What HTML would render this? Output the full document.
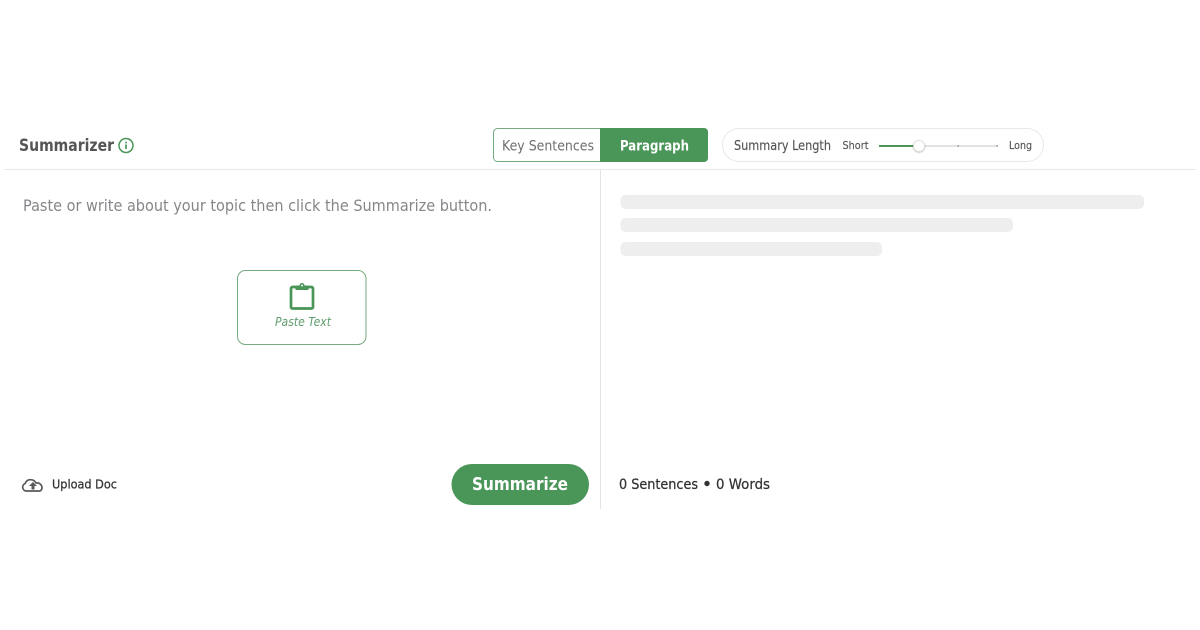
<!DOCTYPE html>
<html lang="en">
<head>
<meta charset="utf-8">
<title>Summarizer</title>
<style>
html,body{margin:0;padding:0;background:#fff;width:1200px;height:630px;overflow:hidden}
svg{display:block}
text{font-family:"DejaVu Sans","Liberation Sans",sans-serif}
</style>
</head>
<body>
<svg width="1200" height="630" viewBox="0 0 1200 630" xmlns="http://www.w3.org/2000/svg">
<defs>
<filter id="s" x="-50%" y="-50%" width="200%" height="200%"><feDropShadow dx="0" dy="0.500" stdDeviation="0.800" flood-color="#000" flood-opacity="0.350"/></filter>
</defs>
<rect width="1200" height="630" fill="#fff"/>
<!-- dividers -->
<rect x="4" y="169" width="1192" height="1" fill="#e8e8e8"/>
<rect x="600" y="170" width="1" height="339" fill="#e4e4e4"/>

<!-- title -->
<text x="19" y="151" font-size="16.500" font-weight="700" fill="#555" textLength="95" lengthAdjust="spacingAndGlyphs">Summarizer</text>
<circle cx="126" cy="145.500" r="7" fill="none" stroke="#4a9558" stroke-width="1.500"/>
<rect x="125.200" y="144.500" width="1.700" height="4.500" fill="#4a9558"/>
<rect x="125.200" y="141.700" width="1.700" height="1.700" fill="#4a9558"/>

<!-- toggle -->
<rect x="493.500" y="128.500" width="214" height="33" rx="4" fill="#fff" stroke="#74ab7f"/>
<path d="M600 128h104a4 4 0 0 1 4 4v26a4 4 0 0 1-4 4H600z" fill="#4a9558"/>
<text x="502" y="150.300" font-size="14" fill="#6f6f6f" textLength="92" lengthAdjust="spacingAndGlyphs">Key Sentences</text>
<text x="620" y="150.300" font-size="14.500" font-weight="700" fill="#fff" textLength="69" lengthAdjust="spacingAndGlyphs">Paragraph</text>

<!-- summary length pill -->
<rect x="722.500" y="128.500" width="321" height="33" rx="16.500" fill="#fff" stroke="#e8e8e8"/>
<text x="734" y="150" font-size="13" fill="#555" stroke="#555" stroke-width="0.150" textLength="97" lengthAdjust="spacingAndGlyphs">Summary Length</text>
<text x="842.500" y="149" font-size="11" fill="#555" stroke="#555" stroke-width="0.150" textLength="26" lengthAdjust="spacingAndGlyphs">Short</text>
<text x="1009" y="149" font-size="11" fill="#555" stroke="#555" stroke-width="0.150" textLength="23" lengthAdjust="spacingAndGlyphs">Long</text>
<rect x="879" y="145" width="119" height="2" fill="#e2e2e2"/>
<rect x="879" y="145" width="40" height="2" fill="#4a9558"/>
<rect x="957.500" y="145" width="1.500" height="2" fill="#aaa"/>
<rect x="996.500" y="145" width="1.500" height="2" fill="#aaa"/>
<circle cx="919" cy="146" r="5.500" fill="#fff" stroke="#dedede" stroke-width="0.800" filter="url(#s)"/>

<!-- placeholder -->
<text x="23" y="210.800" font-size="16" fill="#86868a" textLength="469" lengthAdjust="spacingAndGlyphs">Paste or write about your topic then click the Summarize button.</text>

<!-- paste button -->
<rect x="237.500" y="270.500" width="128.500" height="74" rx="8" fill="#fff" stroke="#74ab7f"/>
<path d="M296 287h-3.500a1.500 1.500 0 0 0-1.500 1.500v18.500a1.500 1.500 0 0 0 1.500 1.500h19a1.500 1.500 0 0 0 1.500-1.500v-18.500a1.500 1.500 0 0 0-1.500-1.500H308" fill="none" stroke="#4a9558" stroke-width="2.700"/>
<path d="M295.500 285.500h4a2.500 2.500 0 0 1 5 0h4v4.500h-13z" fill="#4a9558"/>
<circle cx="302" cy="285.500" r="1" fill="#fff"/>
<text x="275" y="326" font-size="12" font-style="italic" fill="#5f9c6c" textLength="56" lengthAdjust="spacingAndGlyphs">Paste Text</text>

<!-- skeletons -->
<rect x="620.500" y="195" width="523.500" height="14" rx="5" fill="#eeeeee"/>
<rect x="620.500" y="218" width="392.500" height="14" rx="5" fill="#eeeeee"/>
<rect x="620.500" y="242" width="261.500" height="14" rx="5" fill="#eeeeee"/>

<!-- upload -->
<path d="M28 491h-2a3.900 3.900 0 0 1-.8-7.500 5 5 0 0 1 5.200-3.800 6.300 6.300 0 0 1 5.600 3.300 5 5 0 0 1 6 4.300 3.900 3.900 0 0 1-2 3.700h-12z" fill="none" stroke="#5a5a5a" stroke-width="1.700" stroke-linejoin="round"/>
<path d="M33 482l4 4h-2.500v3.500h-3v-3.500H29z" fill="#5a5a5a"/>
<text x="52" y="488.500" font-size="12" fill="#333" stroke="#333" stroke-width="0.250" textLength="65" lengthAdjust="spacingAndGlyphs">Upload Doc</text>

<!-- summarize -->
<rect x="451.500" y="464" width="137.500" height="41" rx="20.500" fill="#4a9558"/>
<text x="472" y="489.800" font-size="18" font-weight="700" fill="#fff" textLength="96" lengthAdjust="spacingAndGlyphs">Summarize</text>

<!-- counts -->
<text x="619" y="489" font-size="14" fill="#333" stroke="#333" stroke-width="0.250" textLength="79" lengthAdjust="spacingAndGlyphs">0 Sentences</text>
<circle cx="707" cy="483.500" r="2.700" fill="#333"/>
<text x="716" y="489" font-size="14" fill="#333" stroke="#333" stroke-width="0.250" textLength="54" lengthAdjust="spacingAndGlyphs">0 Words</text>
</svg>
</body>
</html>
